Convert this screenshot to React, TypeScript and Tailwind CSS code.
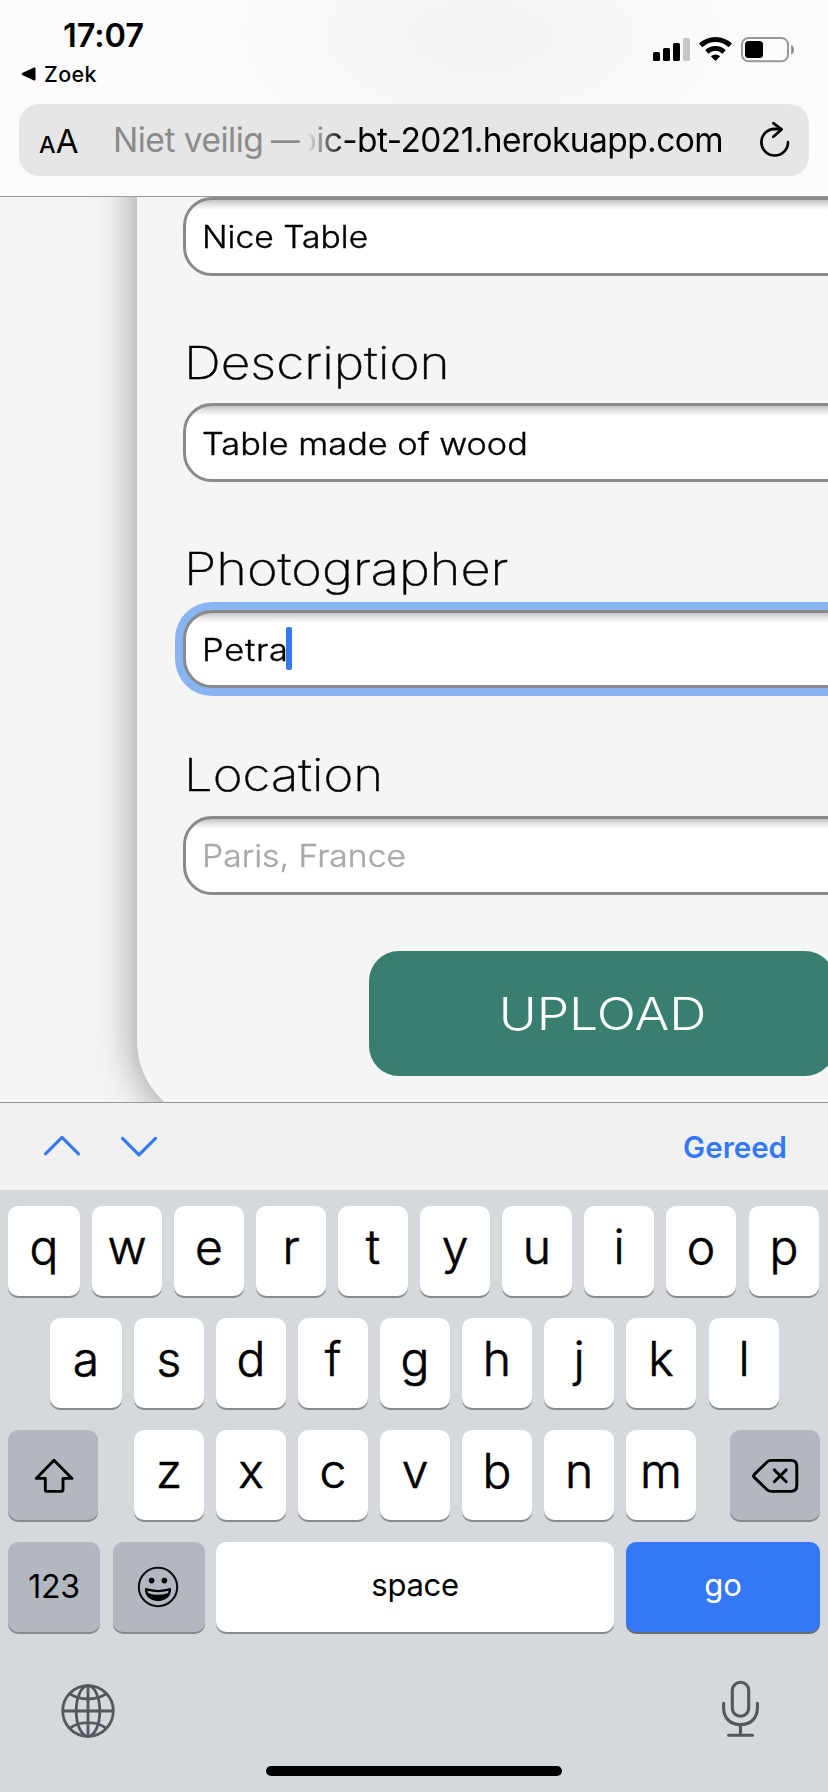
import type { ReactNode } from "react";

const ui = "font-['Inter','Liberation_Sans',sans-serif]";

function StatusIcons() {
  return (
    <svg width="143" height="27" viewBox="0 0 143 27" fill="none">
      <rect x="0" y="16" width="7" height="9" rx="1.5" fill="#000" />
      <rect x="10" y="12" width="7" height="13" rx="1.5" fill="#000" />
      <rect x="20" y="7" width="7" height="18" rx="1.5" fill="#000" />
      <rect x="30" y="2" width="7" height="23" rx="1.5" fill="#c6c6c6" />
      <path d="M47.7 9.4A21.5 21.5 0 0 1 77.3 9.4" stroke="#000" strokeWidth="5" />
      <path d="M53.9 15.9A12.5 12.5 0 0 1 71.1 15.9" stroke="#000" strokeWidth="4.8" />
      <path d="M62.5 25L57.8 20.2A7 7 0 0 1 67.2 20.2Z" fill="#000" />
      <rect x="89" y="2" width="46" height="23.3" rx="6.5" stroke="#999" strokeWidth="2" />
      <rect x="92" y="5" width="18" height="17" rx="3.5" fill="#000" />
      <path d="M138.2 9C140 9.6 141 11.5 141 13.7S140 17.8 138.2 18.4Z" fill="#8c8c8c" />
    </svg>
  );
}

function ReloadIcon() {
  return (
    <svg width="36" height="40" viewBox="0 0 36 40" fill="none" stroke="#000" strokeWidth="2.7" strokeLinecap="round" strokeLinejoin="round">
      <path d="M31 23.2A13.3 13.3 0 1 1 17.7 9.9L24 10.2" />
      <path d="M16.3 4.2L24.6 10.4L16.3 17.8" />
    </svg>
  );
}

function Header() {
  return (
    <header className={`${ui} flex h-[197px] shrink-0 flex-col border-b border-[#9b9b9b] bg-[#fbfbfb] bg-[radial-gradient(ellipse_260px_130px_at_480px_35px,#f5f4f2,#fbfbfb)] text-black`}>
      <div className="flex h-[104px] justify-between pl-[21px] pr-8">
        <div className="flex flex-col pt-4">
          <div className="pl-[42px] text-[32.5px] leading-10 font-semibold tracking-[-0.1px]">17:07</div>
          <div className="mt-[3px] flex h-[30px] items-center gap-2 text-[21.5px] leading-[30px] font-medium tracking-[0.4px]">
            <svg width="15" height="14" viewBox="0 0 15 14">
              <path d="M1.2 6.1L13 0.6Q14.5 0.2 14.5 1.6V12.4Q14.5 13.8 13 13.4L1.2 7.9Q0 7 1.2 6.1Z" fill="#000" />
            </svg>
            <span>Zoek</span>
          </div>
        </div>
        <div className="pt-9">
          <StatusIcons />
        </div>
      </div>
      <div className="mx-[19px] flex h-[72px] items-center rounded-[20px] bg-[#e6e6e6]">
        <div className="flex w-[94px] items-baseline pt-0.5 pl-5 leading-none">
          <span className="text-[23.5px] font-medium">A</span>
          <span className="text-[33px]">A</span>
        </div>
        <div className="flex w-[194px] whitespace-nowrap text-[33.5px] tracking-[-0.5px] text-[#8b8b8b]">
          <span>Niet veilig</span>
          <span className="ml-2 inline-block origin-left scale-x-[0.86]">—</span>
        </div>
        <div className="flex w-[416px] justify-end overflow-hidden whitespace-nowrap text-[33.5px] tracking-[-0.58px] mask-[linear-gradient(to_right,transparent,black_38px)]">
          <span>pic-bt-2021.herokuapp.com</span>
        </div>
        <div className="ml-[34px] pb-0.5">
          <ReloadIcon />
        </div>
      </div>
    </header>
  );
}

function Field({ text, textClass, focused = false }: { text: string; textClass: string; focused?: boolean }) {
  return (
    <div
      className={`flex h-[78.67px] w-[900px] items-center rounded-[29px] border-3 border-[#8a8a8a] bg-white bg-[linear-gradient(to_bottom,#c4c4c4,#e6e6e6_5px,#fff_10px)] pl-4 text-[31px] leading-10 font-light whitespace-nowrap [-webkit-text-stroke:0.4px] ${focused ? "ring-8 ring-[#88b4f2]" : ""}`}
    >
      <span className={`inline-block origin-left pt-0.5 ${textClass}`}>{text}</span>
      {focused && <span className="ml-1.5 h-[43px] w-1.5 rounded-[2px] bg-[#3478f6]" />}
    </div>
  );
}

function Label({ children, className }: { children: ReactNode; className: string }) {
  return (
    <div className="mt-[57px] mb-[10.66px] flex h-[60px] items-center pl-px text-[45px] leading-[60px] font-extralight [-webkit-text-stroke:0.4px]">
      <span className={`inline-block origin-left ${className}`}>{children}</span>
    </div>
  );
}

function UploadForm() {
  return (
    <main className={`${ui} h-[905px] overflow-hidden bg-[#f5f5f5] text-black`}>
      <div className="-mt-[100px] ml-[137px] h-[1026px] w-[1000px] rounded-[82px] bg-[#f5f5f5] pt-[100px] pl-[46px] shadow-[0_0_40px_rgba(0,0,0,0.42)]">
        <Field text="Nice Table" textClass="scale-x-[1.085]" />
        <Label className="scale-x-[1.141]">Description</Label>
        <Field text="Table made of wood" textClass="scale-x-[1.107]" />
        <Label className="scale-x-[1.162]">Photographer</Label>
        <Field text="Petra" textClass="scale-x-[1.11] tracking-[0.7px]" focused />
        <Label className="scale-x-[1.132]">Location</Label>
        <Field text="Paris, France" textClass="scale-x-[1.088] text-[#a9a9a9]" />
        <div className="mt-[56.3px] ml-[186px] flex h-[125.6px] w-[466px] items-center justify-center rounded-[30px] bg-[#387f70] pt-px text-[44.5px] font-light text-white">
          <span className="inline-block scale-x-[1.16]">UPLOAD</span>
        </div>
      </div>
    </main>
  );
}

function Toolbar() {
  return (
    <div className={`${ui} flex h-[88px] shrink-0 items-center justify-between border-t border-[#97979a] bg-[#f1f1f1] pr-[41px] pl-[43px]`}>
      <div className="flex gap-[39px]">
        <svg width="38" height="24" viewBox="0 0 38 24" fill="none" stroke="#3478f6" strokeWidth="3.1" strokeLinecap="round" strokeLinejoin="round">
          <path d="M2.5 18.8L19 2.3L35.5 18.8" />
        </svg>
        <svg width="38" height="24" viewBox="0 0 38 24" fill="none" stroke="#3478f6" strokeWidth="3.1" strokeLinecap="round" strokeLinejoin="round">
          <path d="M2.5 3.3L19 19.8L35.5 3.3" />
        </svg>
      </div>
      <span className="text-[29.5px] leading-10 font-semibold text-[#3478f6]">Gereed</span>
    </div>
  );
}

const keyBase = "flex h-[90px] shrink-0 items-center justify-center rounded-[10px]";
const keyEdge = "shadow-[0_2px_0_#898a8d]";

function LetterKey({ letter, className = "w-[70px]" }: { letter: string; className?: string }) {
  return <div className={`${keyBase} ${keyEdge} bg-white pb-2 text-[48px] font-light [-webkit-text-stroke:0.6px] ${className}`}>{letter}</div>;
}

function ShiftIcon() {
  return (
    <svg className="mt-0.5 ml-0.5" width="40" height="36" viewBox="0 0 40 36" fill="none" stroke="#000" strokeWidth="2.9" strokeLinejoin="round">
      <path d="M20 2.2L38 20.4H29V31.5Q29 33.4 27 33.4H13Q11.3 33.4 11.3 31.5V20.4H2.2Z" />
    </svg>
  );
}

function DeleteIcon() {
  return (
    <svg className="mt-0.5" width="49" height="36" viewBox="0 0 49 36" fill="none" stroke="#000" strokeWidth="2.9" strokeLinecap="round" strokeLinejoin="round">
      <path d="M3.3 16.4L15.8 4.3Q17.8 2.4 20.5 2.4H40Q45.8 2.4 45.8 8.2V27.6Q45.8 33.4 40 33.4H20.5Q17.8 33.4 15.8 31.5L3.3 19.4Q1.9 17.9 3.3 16.4Z" />
      <path d="M23.3 11.9L35.2 23.8M35.2 11.9L23.3 23.8" />
    </svg>
  );
}

function EmojiIcon() {
  return (
    <svg className="mr-0.5" width="42" height="42" viewBox="0 0 42 42" fill="none">
      <circle cx="21" cy="21" r="19.2" stroke="#0c0f12" strokeWidth="2.1" />
      <circle cx="14.6" cy="14.6" r="2.8" fill="#000" />
      <circle cx="27.4" cy="14.6" r="2.8" fill="#000" />
      <path d="M8.6 22.7Q21 26.3 33.4 22.7C33.6 30.2 28.4 34.3 21 34.3S8.4 30.2 8.6 22.7Z" fill="#000" stroke="#000" strokeWidth="1.2" strokeLinejoin="round" />
      <path d="M10.4 24.7Q21 27.6 31.6 24.7Q31.3 26.4 30.6 27.2Q21 30.4 11.4 27.2Q10.6 26.4 10.4 24.7Z" fill="#b3b7c0" />
    </svg>
  );
}

function GlobeIcon() {
  return (
    <svg width="54" height="54" viewBox="0 0 54 54" fill="none" stroke="#54575d" strokeWidth="2.8">
      <circle cx="27" cy="27" r="25.3" />
      <ellipse cx="27" cy="27" rx="11.8" ry="25.3" />
      <path d="M27 1.7V52.3M1.7 27H52.3M8.8 9.6Q16 15 27 15T45.2 9.6M8.8 44.4Q16 38.7 27 38.7T45.2 44.4" />
    </svg>
  );
}

function MicIcon() {
  return (
    <svg width="40" height="58" viewBox="0 0 40 58" fill="none" stroke="#54575d" strokeWidth="3.1" strokeLinecap="round">
      <rect x="11.3" y="2.3" width="16.4" height="34" rx="8.2" />
      <path d="M2.6 23.3V27.8C2.6 38.6 9.8 44.6 19.5 44.6S36.4 38.6 36.4 27.8V23.3M19.5 44.6V55.3M7.6 55.3H31.6" />
    </svg>
  );
}

function Keyboard() {
  return (
    <div className={`${ui} flex h-[602px] shrink-0 flex-col bg-[#d5d8dd] pt-4 leading-none text-black`}>
      <div className="flex flex-col gap-[22px]">
        <div className="flex gap-3 pl-2">
          <LetterKey letter="q" className="w-[72px]" />
          {["w", "e", "r", "t", "y", "u", "i", "o"].map((l) => (
            <LetterKey key={l} letter={l} />
          ))}
          <LetterKey letter="p" className="ml-px w-[70px]" />
        </div>
        <div className="flex gap-3 pl-[50px]">
          <LetterKey letter="a" className="w-[72px]" />
          {["s", "d", "f", "g", "h", "j", "k"].map((l) => (
            <LetterKey key={l} letter={l} />
          ))}
          <LetterKey letter="l" className="ml-px w-[70px]" />
        </div>
        <div className="flex pl-2">
          <div className={`${keyBase} ${keyEdge} w-[90px] bg-[#b3b7c0]`}>
            <ShiftIcon />
          </div>
          <div className="mr-[34px] ml-9 flex gap-3">
            {["z", "x", "c", "v", "b", "n", "m"].map((l) => (
              <LetterKey key={l} letter={l} />
            ))}
          </div>
          <div className={`${keyBase} ${keyEdge} w-[90px] bg-[#b3b7c0]`}>
            <DeleteIcon />
          </div>
        </div>
        <div className="flex pl-2">
          <div className={`${keyBase} ${keyEdge} w-[92px] bg-[#b3b7c0] text-[32px] tracking-[-0.2px]`}>123</div>
          <div className={`${keyBase} ${keyEdge} ml-[13px] w-[92px] bg-[#b3b7c0]`}>
            <EmojiIcon />
          </div>
          <div className={`${keyBase} ${keyEdge} ml-[11px] w-[398px] bg-white pb-1.5 text-[31px] tracking-[-0.3px]`}>space</div>
          <div className={`${keyBase} ml-3 w-[194px] bg-[#3478f6] pb-1.5 text-[31px] text-white shadow-[0_2px_0_#6b6c6f]`}>go</div>
        </div>
      </div>
      <div className="mt-[47px] flex h-[60px] items-center justify-between pr-[67px] pl-[61px]">
        <div className="pt-[3px]">
          <GlobeIcon />
        </div>
        <MicIcon />
      </div>
      <div className="mt-[27px] ml-[266px] h-2.5 w-[296px] rounded-full bg-black" />
    </div>
  );
}

export default function App() {
  return (
    <div className="flex h-[1792px] w-[828px] flex-col overflow-hidden bg-[#d5d8dd]">
      <Header />
      <UploadForm />
      <Toolbar />
      <Keyboard />
    </div>
  );
}
